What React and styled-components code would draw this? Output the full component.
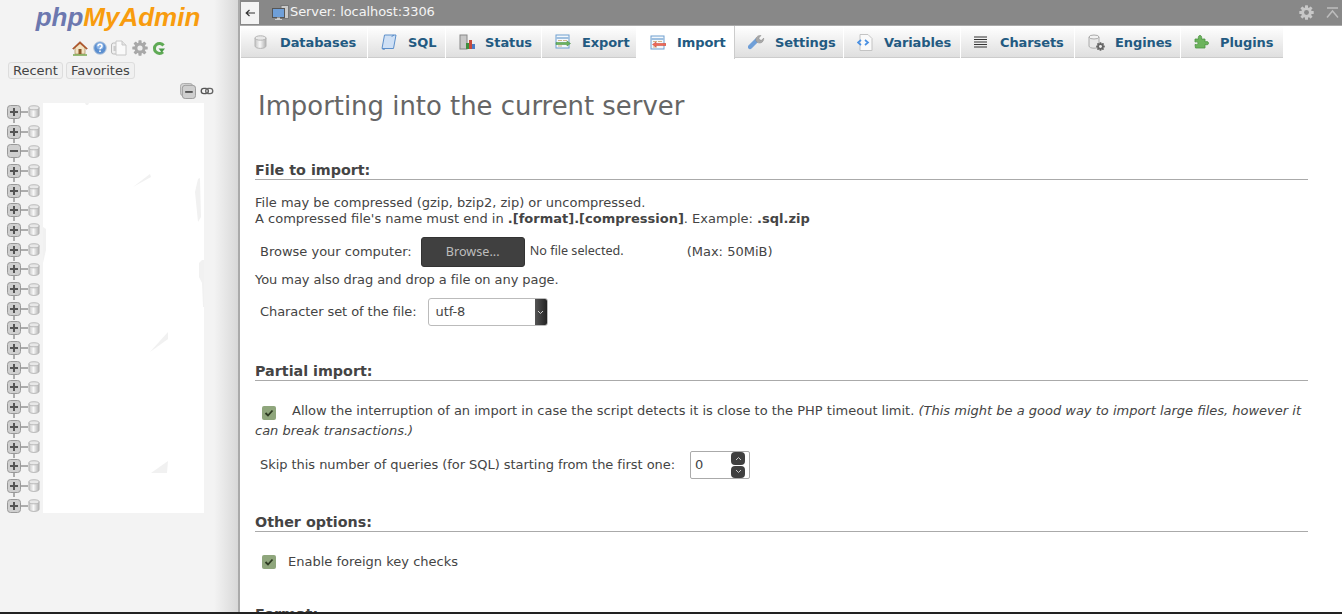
import styled, { createGlobalStyle } from 'styled-components';

const GlobalStyle = createGlobalStyle`
  html, body {
    margin: 0;
    height: 100%;
    overflow: hidden;
    background: #fff;
    font-family: "DejaVu Sans", sans-serif;
    font-size: 13px;
    color: #444;
    text-rendering: optimizeLegibility;
  }
`;

const Page = styled.div`
  display: flex;
  width: 1342px;
  height: 614px;
  overflow: hidden;
  border-bottom: 2px solid #222;
  box-sizing: border-box;
`;

/* ---------- left panel ---------- */

const Sidebar = styled.aside`
  width: 240px;
  flex: none;
  box-sizing: border-box;
  background: linear-gradient(to right, #f3f3f3 0, #f3f3f3 214px, #e6e6e6 226px, #d8d8d8 238px, #aaa 238px, #aaa 240px);
  padding-top: 2px;
`;

const Logo = styled.div`
  width: 240px;
  text-align: center;
  padding-right: 4px;
  box-sizing: border-box;
  font-family: "Liberation Sans", sans-serif;
  font-weight: bold;
  font-style: italic;
  font-size: 26px;
  line-height: 30px;
  color: #f89c0e;
  span {
    color: #6c78af;
  }
`;

const QuickIcons = styled.div`
  display: flex;
  justify-content: center;
  gap: 4.5px;
  margin-top: 7px;
  padding-right: 2px;
  height: 18px;
  align-items: center;
`;

const RecentRow = styled.div`
  display: flex;
  gap: 3px;
  margin: 5px 0 0 8px;
`;

const RecentButton = styled.div`
  height: 15px;
  line-height: 15px;
  padding: 0 4px;
  border: 1px solid #ddd;
  border-radius: 3px;
  background: #f0f0f0;
  color: #444;
  font-size: 13px;
`;

const TreeControls = styled.div`
  display: flex;
  justify-content: flex-end;
  align-items: center;
  gap: 4px;
  height: 18px;
  margin-top: 3px;
  padding-right: 26px;
`;

const TreeArea = styled.div`
  display: flex;
  margin-top: 4px;
  padding-left: 7px;
`;

const TreeColumn = styled.div`
  width: 36px;
  flex: none;
`;

const TreeRow = styled.div`
  height: 19.7px;
  display: flex;
  align-items: center;
  position: relative;
  top: -2px;
`;

const TreePanel = styled.div`
  width: 161px;
  height: 410px;
  background: #fff;
  margin-top: -1px;
  svg {
    display: block;
  }
`;

/* ---------- right panel ---------- */

const Main = styled.main`
  flex: 1;
  min-width: 0;
  display: flex;
  flex-direction: column;
  overflow: hidden;
`;

const ServerBar = styled.div`
  height: 25px;
  flex: none;
  background: #888;
  display: flex;
  align-items: center;
  color: #fff;
  font-size: 13px;
  border-bottom: 1px solid #aaa;
`;

const BackButton = styled.div`
  width: 18px;
  height: 22px;
  margin: 0 13px 0 1px;
  background: #f3f3f3;
  color: #333;
  display: flex;
  align-items: center;
  justify-content: center;
`;

const ServerName = styled.div`
  margin-left: 1px;
  padding-bottom: 2px;
  flex: 1;
  color: #f4f4f4;
  letter-spacing: -0.09px;
`;

const BarTools = styled.div`
  display: flex;
  align-items: center;
  gap: 12px;
  padding-right: 3px;
`;

const TabBar = styled.nav`
  height: 32px;
  flex: none;
  display: flex;
  padding-left: 1px;
  border-bottom: 1px solid #fff;
`;

const Tab = styled.div`
  width: ${p => p.$w}px;
  flex: none;
  box-sizing: border-box;
  display: flex;
  align-items: center;
  margin-right: 1px;
  padding: ${p => (p.$active ? 0 : 1)}px 0 0 13px;
  font-weight: bold;
  font-size: 13px;
  letter-spacing: -0.1px;
  color: #235a81;
  background: ${p => (p.$active ? '#fff' : 'linear-gradient(#fff, #dfdfdf)')};
  border-bottom: ${p => (p.$active ? 'none' : '1px solid #ccc')};
  box-shadow: ${p => (p.$active ? '1px 0 0 #ccc' : 'none')};
  height: ${p => (p.$active ? 33 : 32)}px;
  svg {
    flex: none;
    margin-right: ${p => p.$gap}px;
  }
`;

const Content = styled.div`
  padding: 0 34px 0 15px;
`;

const PageTitle = styled.h2`
  margin: 31px 0 0 3px;
  font-weight: normal;
  font-size: 25.9px;
  line-height: 32px;
  color: #666;
`;

const Section = styled.section`
  margin-top: ${p => p.$top}px;
`;

const SectionHead = styled.div`
  font-weight: bold;
  font-size: 14.3px;
  line-height: 18px;
  color: #444;
  border-bottom: 1px solid #aaa;
  height: 19px;
  box-sizing: border-box;
  width: 1053px;
`;

const Para = styled.div`
  font-size: 13px;
  line-height: 16px;
  color: #444;
  width: 1053px;
  margin-top: ${p => p.$top || 0}px;
  letter-spacing: ${p => p.$tight || 0}px;
`;

const FormRow = styled.div`
  display: flex;
  align-items: center;
  padding-left: 5px;
  line-height: 16px;
  white-space: nowrap;
  margin-top: ${p => p.$top}px;
  letter-spacing: ${p => p.$tight || 0}px;
`;

const BrowseButton = styled.div`
  width: 104px;
  height: 30px;
  margin: 0 5px 0 9px;
  box-sizing: border-box;
  background: #404040;
  border: 1px solid #333;
  border-radius: 3px;
  color: #bdbdbd;
  display: flex;
  align-items: center;
  justify-content: center;
  font-family: "Noto Sans", sans-serif;
  font-size: 12.6px;
`;

const NoFile = styled.span`
  font-family: "Noto Sans", sans-serif;
  font-size: 12.6px;
  margin-bottom: 2px;
`;

const MaxNote = styled.span`
  margin-left: 63px;
`;

const Select = styled.div`
  width: 120px;
  height: 28px;
  margin-left: 11px;
  box-sizing: border-box;
  border: 1px solid #bbb;
  border-radius: 3px;
  background: #fff;
  display: flex;
  align-items: center;
  padding-left: 7px;
  justify-content: space-between;
  overflow: hidden;
`;

const SelectArrow = styled.div`
  width: 12px;
  height: 100%;
  background: linear-gradient(to right, #555, #222);
  color: #ddd;
  display: flex;
  align-items: center;
  justify-content: center;
`;

const Check = styled.span`
  display: inline-flex;
  width: 14px;
  height: 14px;
  border-radius: 2px;
  background: #8fa67c;
  align-items: center;
  justify-content: center;
  vertical-align: -2px;
`;

const CheckPara = styled(Para)`
  text-indent: 7px;
  line-height: 20px;
`;

const CheckLabel = styled.span`
  margin-left: 16px;
`;

const CheckRow = styled.div`
  display: flex;
  align-items: center;
  gap: 12px;
  padding-left: 7px;
  line-height: 16px;
  margin-top: 22px;
`;

const NumberInput = styled.div`
  width: 60px;
  height: 28px;
  margin-left: 15px;
  box-sizing: border-box;
  border: 1px solid #aaa;
  border-radius: 2px;
  background: #fff;
  padding-left: 4px;
  display: flex;
  align-items: center;
  justify-content: space-between;
`;

const Spinner = styled.div`
  width: 14px;
  height: 26px;
  margin-right: 4px;
  display: flex;
  flex-direction: column;
  gap: 1px;
`;

const SpinButton = styled.div`
  flex: 1;
  background: #404040;
  border-radius: 4px;
  color: #ddd;
  display: flex;
  align-items: center;
  justify-content: center;
`;

/* ---------- icons ---------- */

const Db = ({ size = 13 }) => (
  <svg width={size} height={size + 1} viewBox="0 0 13 14">
    <defs>
      <linearGradient id="dbg" x1="0" x2="1" y1="0" y2="0">
        <stop offset="0" stopColor="#c4c4c4" />
        <stop offset="0.45" stopColor="#f8f8f8" />
        <stop offset="1" stopColor="#b0b0b0" />
      </linearGradient>
    </defs>
    <path d="M1 3v8c0 1.400 2.400 2.400 5.500 2.400S12 12.400 12 11V3z" fill="url(#dbg)" stroke="#b4b4b4" />
    <ellipse cx="6.500" cy="3" rx="5.500" ry="2.200" fill="#e8e8e8" stroke="#b4b4b4" />
  </svg>
);

const TreeToggle = ({ open, last }) => (
  <svg width="21" height="20" viewBox="0 0 21 20" style={{ overflow: 'visible' }}>
    <path d={last ? 'M7 3V10M14 10h7' : 'M7 3V21M14 10h7'} stroke="#666" strokeWidth="1" fill="none" />
    <rect x="0.500" y="3.500" width="13" height="13" rx="3" fill="#cfcfcf" stroke="#999" />
    <path d={open ? 'M3 10h8' : 'M3 10h8M7 6v8'} stroke="#555" strokeWidth="2" fill="none" />
  </svg>
);

const HomeIcon = () => (
  <svg width="16" height="16" viewBox="0 0 16 16">
    <path d="M3 7v7h10V7L8 3z" fill="#f3e3c3" stroke="#a88a5a" strokeWidth=".7" />
    <path d="M.5 8.500 8 1.500l7.500 7-1 .8L8 3.600 1.500 9.300z" fill="#b5562a" stroke="#8a3f1a" strokeWidth=".4" />
    <rect x="6.500" y="9" width="3" height="5" fill="#8d5a2b" />
    <path d="M1 15h14" stroke="#6ea13f" strokeWidth="1.400" />
  </svg>
);

const HelpIcon = () => (
  <svg width="14" height="14" viewBox="0 0 14 14">
    <circle cx="7" cy="7" r="6.300" fill="#5b8fd0" stroke="#b9c9dd" />
    <circle cx="7" cy="5" r="3.600" fill="#8cb4e6" />
    <path d="M5 5.200c0-2.600 4-2.600 4 0 0 1.400-2 1.400-2 3" fill="none" stroke="#fff" strokeWidth="1.400" />
    <circle cx="7" cy="10.200" r=".9" fill="#fff" />
  </svg>
);

const DocsIcon = () => (
  <svg width="16" height="16" viewBox="0 0 16 16">
    <rect x="0.500" y="3" width="8" height="11" rx="2" fill="#f0f0f0" stroke="#bbb" />
    <path d="M5 1h6l4 4v10H5z" fill="#fafafa" stroke="#c8c8c8" />
    <path d="M11 1v4h4" fill="#e4e4e4" stroke="#c8c8c8" />
    <rect x="2.500" y="6" width="2.500" height="5" fill="#ccc" />
  </svg>
);

const Gear = ({ size = 16, color = '#a8a8a8', hole = '#eee' }) => (
  <svg width={size} height={size} viewBox="0 0 16 16">
    <g fill={color}>
      {[0, 45, 90, 135].map(a => (
        <rect key={a} x="6.400" y="0.300" width="3.200" height="15.400" rx="0.600" transform={`rotate(${a} 8 8)`} />
      ))}
      <circle cx="8" cy="8" r="5.600" />
    </g>
    <circle cx="8" cy="8" r="2.600" fill={hole} />
  </svg>
);

const ReloadIcon = () => (
  <svg width="14" height="15" viewBox="0 0 14 15">
    <path d="M11.500 4.500A5 5 0 1 0 11 11" fill="none" stroke="#5faa55" strokeWidth="3" />
    <path d="M6.500 7.500h6.500l-3.200 4z" fill="#4c9a48" />
  </svg>
);

const CollapseIcon = () => (
  <svg width="16" height="16" viewBox="0 0 17 17">
    <rect x="0.500" y="0.500" width="13" height="13" rx="3" fill="#d5d5d5" stroke="#aaa" />
    <rect x="2.500" y="2.500" width="14" height="14" rx="3" fill="#cfcfcf" stroke="#999" />
    <path d="M5.500 9.500h8" stroke="#555" strokeWidth="2" />
  </svg>
);

const LinkIcon = () => (
  <svg width="14" height="8" viewBox="0 0 15 9">
    <rect x="1" y="1.500" width="8" height="6" rx="3" fill="none" stroke="#555" strokeWidth="1.500" />
    <rect x="6" y="1.500" width="8" height="6" rx="3" fill="none" stroke="#666" strokeWidth="1.500" />
  </svg>
);

const BackArrow = () => (
  <svg width="10" height="8" viewBox="0 0 10 8">
    <path d="M10 4H1.500M4.500 1 1.200 4l3.300 3" fill="none" stroke="#333" strokeWidth="1.200" />
  </svg>
);

const ServerIcon = () => (
  <svg width="17" height="16" viewBox="0 0 17 16">
    <rect x="9" y="0.500" width="7.500" height="13" fill="#c9c9c9" stroke="#777" />
    <rect x="0.500" y="3.500" width="12" height="9" fill="#6f9fd8" stroke="#555" />
    <path d="M5 12.500h3v1.500h2v1H3v-1h2z" fill="#ccc" />
  </svg>
);

const CollapseTop = () => (
  <svg width="13" height="12" viewBox="0 0 13 12">
    <path d="M1 1h11M1 10.500 6.500 4l5.500 6.500" fill="none" stroke="#bdbdbd" strokeWidth="1.500" />
  </svg>
);

const ScrollIcon = () => (
  <svg width="16" height="17" viewBox="0 0 16 17">
    <path d="M3.500 1H15l-2.500 13.500H1z" fill="#cfe0f5" stroke="#5c8fca" />
    <path d="M1 14.500c1.500 1.500 3 1 3.500-.5M13 1.500c-1.500-.5-2 .5-2 1.500" fill="none" stroke="#5c8fca" />
  </svg>
);

const StatusIcon = () => (
  <svg width="16" height="16" viewBox="0 0 16 16">
    <rect x="1" y="1" width="7" height="14" fill="#c8c8c8" stroke="#888" />
    <rect x="7" y="9" width="3" height="6" fill="#3f8f3f" />
    <rect x="10" y="6" width="3" height="9" fill="#c84a3a" />
    <rect x="13" y="10" width="3" height="5" fill="#4a7cc4" />
  </svg>
);

const TableArrow = ({ color, stroke, flip }) => (
  <svg width="16" height="16" viewBox="0 0 16 16">
    <rect x="1" y="1" width="13" height="13" fill="#f4f8fc" stroke="#6f9fd0" />
    <path d="M1 4h13" stroke="#9fc0e0" strokeWidth="2" />
    <path d="M3 6.500h4M8 6.500h4M3 12h4" stroke="#c9a26a" strokeWidth=".8" />
    <path d={flip ? 'M16 8.500H6V7L2.500 9.500 6 12v-1.500h10z' : 'M1 8.500h11V7l3.500 2.500L12 12v-1.500H1z'} fill={color} stroke={stroke} strokeWidth=".5" />
  </svg>
);

const WrenchIcon = () => (
  <svg width="17" height="17" viewBox="0 0 17 17">
    <path d="M2 13 9 6" stroke="#6f9fd8" strokeWidth="4.400" strokeLinecap="round" />
    <path d="M8 7c-1-3 1.500-6 5-5.500L10.800 4l.7 1.800 2 .5 2.200-2.200c.4 3.500-3 6-6 4.500z" fill="#a8a8a8" stroke="#888" strokeWidth=".5" />
  </svg>
);

const VariablesIcon = () => (
  <svg width="16" height="17" viewBox="0 0 16 17">
    <path d="M3 .5h8l4 4v12H3z" fill="#fafafa" stroke="#c4c4c4" />
    <path d="M4 6 1 8.500 4 11M8 6l3 2.500L8 11" fill="none" stroke="#4a90e2" strokeWidth="1.700" />
  </svg>
);

const LinesIcon = () => (
  <svg width="13" height="13" viewBox="0 0 13 13">
    <path d="M0 1h13M0 3.500h13M0 6h13M0 8.500h13M0 11h13" stroke="#333" strokeWidth="1" />
  </svg>
);

const EnginesIcon = () => (
  <svg width="17" height="17" viewBox="0 0 17 17">
    <path d="M1 3v9c0 1.400 2.400 2.200 5 2.200s5-.8 5-2.200V3z" fill="#e8e8e8" stroke="#aaa" />
    <ellipse cx="6" cy="3" rx="5" ry="2" fill="#f2f2f2" stroke="#aaa" />
    <g transform="translate(8 8) scale(.56)">
      <Gear size={16} color="#666" hole="#eee" />
    </g>
  </svg>
);

const PluginIcon = () => (
  <svg width="15" height="14" viewBox="0 0 15 14">
    <path d="M1 4h3.500C4 2 4.500.5 6 .5S8 2 7.500 4H11v3c1.500-.7 3.500-.5 3.500 1.200S12.500 10 11 9.500V13H1.500L1 9.500C3 10 4 9.200 4 8.200S3 6.500 1 7z" fill="#6cb35c" stroke="#4d9442" strokeWidth=".8" />
  </svg>
);

const Tick = () => (
  <svg width="10" height="8" viewBox="0 0 10 8">
    <path d="M1.500 4 4 6.500 8.500 1.500" fill="none" stroke="#2d3a22" strokeWidth="1.800" />
  </svg>
);

const Chevron = ({ up }) => (
  <svg width="7" height="5" viewBox="0 0 7 5">
    <path d={up ? 'M1 4 3.500 1.500 6 4' : 'M1 1 3.500 3.500 6 1'} fill="none" stroke="#ccc" strokeWidth="1" />
  </svg>
);

const PanelSpecks = () => (
  <svg width="161" height="410" viewBox="0 0 161 410">
    <path
      d="M42 0h4l-1 2h-2zM90 84l17-13 1 3zM155 76l-3 13 3 30 3-5-1-39zM0 124l3 2v21l-3 13zM159 157l-3 3v14l3 6 1 24h1v-47zM107 249l18-20v7zM108 370l17-12-1 12z"
      fill="#f1f1f1"
    />
  </svg>
);

/* ---------- data ---------- */

const tabs = [
  { label: 'Databases', w: 126, icon: <Db size={13} />, gap: 13 },
  { label: 'SQL', w: 77, icon: <ScrollIcon />, gap: 11 },
  { label: 'Status', w: 95, icon: <StatusIcon />, gap: 10 },
  { label: 'Export', w: 94, icon: <TableArrow color="#6cb35c" stroke="#3f8a3f" />, gap: 11 },
  { label: 'Import', w: 97, icon: <TableArrow flip color="#ee6a5a" stroke="#c8402f" />, gap: 11 },
  { label: 'Settings', w: 108, icon: <WrenchIcon />, gap: 10 },
  { label: 'Variables', w: 116, icon: <VariablesIcon />, gap: 11 },
  { label: 'Charsets', w: 113, icon: <LinesIcon />, gap: 13 },
  { label: 'Engines', w: 105, icon: <EnginesIcon />, gap: 10 },
  { label: 'Plugins', w: 102, icon: <PluginIcon />, gap: 11 },
];

const treeRows = Array.from({ length: 21 }, (_, i) => i);

export default function App() {
  return (
    <>
      <GlobalStyle />
      <Page>
        <Sidebar>
          <Logo><span>php</span>MyAdmin</Logo>
          <QuickIcons>
            <HomeIcon />
            <HelpIcon />
            <DocsIcon />
            <Gear size={16} />
            <ReloadIcon />
          </QuickIcons>
          <RecentRow>
            <RecentButton>Recent</RecentButton>
            <RecentButton>Favorites</RecentButton>
          </RecentRow>
          <TreeControls>
            <CollapseIcon />
            <LinkIcon />
          </TreeControls>
          <TreeArea>
            <TreeColumn>
              {treeRows.map(i => (
                <TreeRow key={i}>
                  <TreeToggle open={i === 2} last={i === treeRows.length - 1} />
                  <Db size={12} />
                </TreeRow>
              ))}
            </TreeColumn>
            <TreePanel><PanelSpecks /></TreePanel>
          </TreeArea>
        </Sidebar>
        <Main>
          <ServerBar>
            <BackButton><BackArrow /></BackButton>
            <ServerIcon />
            <ServerName>Server: localhost:3306</ServerName>
            <BarTools>
              <Gear size={15} color="#c8c8c8" hole="#888" />
              <CollapseTop />
            </BarTools>
          </ServerBar>
          <TabBar>
            {tabs.map(t => (
              <Tab key={t.label} $w={t.w} $active={t.label === 'Import'} $gap={t.gap}>
                {t.icon}
                {t.label}
              </Tab>
            ))}
          </TabBar>
          <Content>
            <PageTitle>Importing into the current server</PageTitle>
            <Section $top={39}>
              <SectionHead>File to import:</SectionHead>
              <Para $top={15}>
                File may be compressed (gzip, bzip2, zip) or uncompressed.<br />
                A compressed file's name must end in <b>.[format].[compression]</b>. Example: <b>.sql.zip</b>
              </Para>
              <FormRow $top={10}>
                Browse your computer:
                <BrowseButton>Browse...</BrowseButton>
                <NoFile>No file selected.</NoFile>
                <MaxNote>(Max: 50MiB)</MaxNote>
              </FormRow>
              <Para $top={5} $tight={-0.065}>You may also drag and drop a file on any page.</Para>
              <FormRow $top={10} $tight={-0.08}>
                Character set of the file:
                <Select>
                  utf-8
                  <SelectArrow><Chevron /></SelectArrow>
                </Select>
              </FormRow>
            </Section>
            <Section $top={36}>
              <SectionHead>Partial import:</SectionHead>
              <CheckPara $top={20}>
                <Check><Tick /></Check>
                <CheckLabel>
                  Allow the interruption of an import in case the script detects it is close to the PHP timeout limit.{' '}
                  <i>(This might be a good way to import large files, however it can break transactions.)</i>
                </CheckLabel>
              </CheckPara>
              <FormRow $top={10} $tight={-0.045}>
                Skip this number of queries (for SQL) starting from the first one:
                <NumberInput>
                  0
                  <Spinner>
                    <SpinButton><Chevron up /></SpinButton>
                    <SpinButton><Chevron /></SpinButton>
                  </Spinner>
                </NumberInput>
              </FormRow>
            </Section>
            <Section $top={34}>
              <SectionHead>Other options:</SectionHead>
              <CheckRow>
                <Check><Tick /></Check>
                Enable foreign key checks
              </CheckRow>
            </Section>
            <Section $top={35}>
              <SectionHead>Format:</SectionHead>
            </Section>
          </Content>
        </Main>
      </Page>
    </>
  );
}
